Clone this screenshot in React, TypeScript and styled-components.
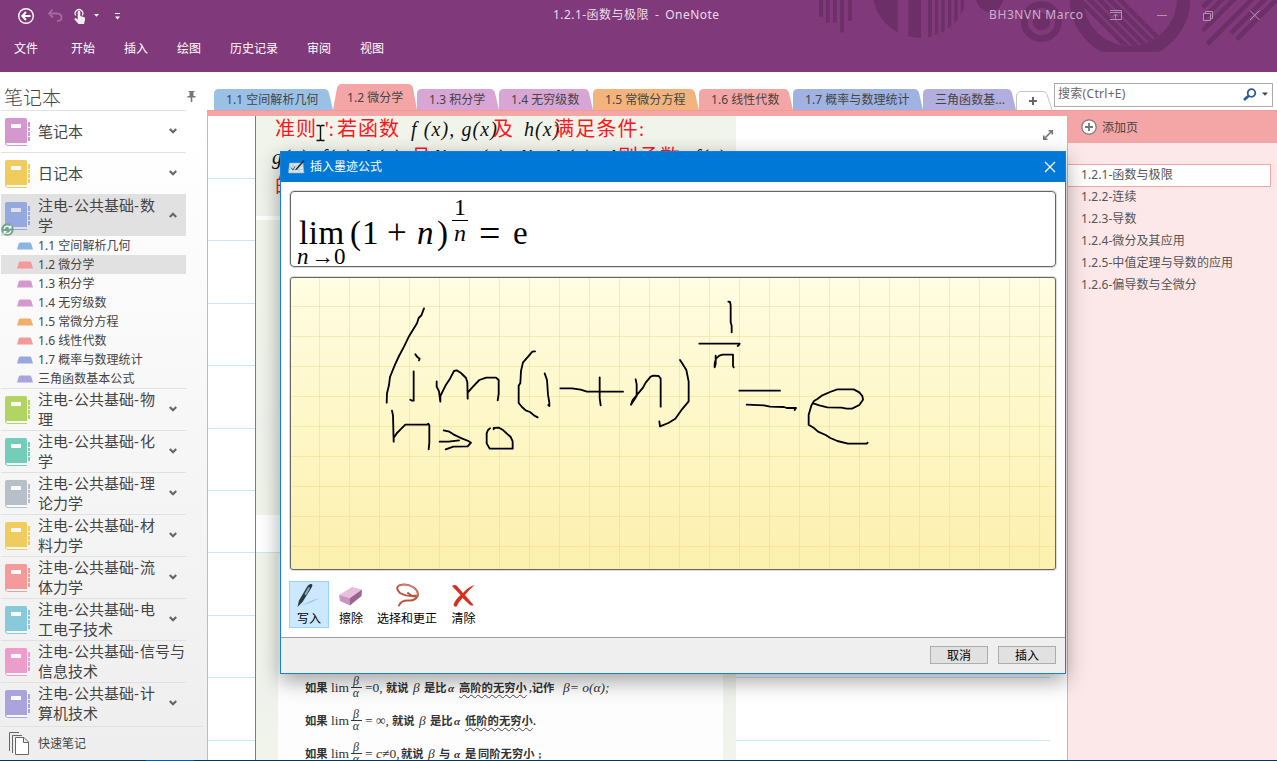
import React from "react";
import styled, { createGlobalStyle } from "styled-components";

const ui = `"Noto Sans", "Noto Sans CJK SC", sans-serif`;
const times = `"Liberation Serif", "Noto Sans CJK SC", serif`;

const Global = createGlobalStyle`
  body { margin: 0; background: #fff; overflow: hidden; }
  * { box-sizing: border-box; }
  svg { display: block; flex: none; }
`;

const App_ = styled.div`
  position: relative;
  width: 1277px;
  height: 761px;
  display: flex;
  flex-direction: column;
  overflow: hidden;
  font: 12px/16px ${ui};
  color: #444;
  white-space: nowrap;
`;

/* ---------- header ---------- */
const Header = styled.header`
  position: relative;
  height: 72px;
  flex: none;
  background: #80397b;
  color: #fff;
`;
const Deco = styled.svg`
  position: absolute;
  right: 0;
  top: 0;
`;
const TitleBar = styled.div`
  position: relative;
  height: 32px;
  display: grid;
  grid-template-columns: 553px 1fr auto;
  align-items: center;
`;
const QuickAccess = styled.div`
  display: flex;
  align-items: center;
  padding-left: 18px;
`;
const WindowTitle = styled.div`
  color: #eadcea;
  letter-spacing: 0.45px;
  word-spacing: 2.5px;
  padding-bottom: 2px;
`;
const WindowTools = styled.div`
  display: flex;
  align-items: center;
  color: #cbb0c9;
`;
const UserName = styled.span`
  width: 121px;
  letter-spacing: 0.6px;
  padding-bottom: 2px;
`;
const Menu = styled.nav`
  position: relative;
  display: flex;
  gap: 29px;
  padding: 9px 0 0 14px;
`;
const MenuItem = styled.span<{ $first?: boolean }>`
  margin-right: ${(p) => (p.$first ? 4 : 0)}px;
`;

/* ---------- body ---------- */
const Body = styled.div`
  flex: 1;
  display: flex;
  min-height: 0;
`;
const Sidebar = styled.aside`
  width: 207px;
  flex: none;
  display: flex;
  flex-direction: column;
  padding-left: 1px;
  background: linear-gradient(#fff, #fff 60px, #f8f8f8 45%, #eeeeee);
`;
const SideTitle = styled.div`
  height: 39px;
  flex: none;
  width: 185px;
  border-bottom: 1px solid #e1e1e1;
  display: flex;
  align-items: flex-end;
  font-size: 19px;
  line-height: 24px;
  font-weight: 300;
  padding-left: 3px;
`;
const PinSlot = styled.span`
  margin-left: 126px;
  padding-bottom: 8px;
`;
const Notebook = styled.div<{ $selected?: boolean; $last?: boolean }>`
  position: relative;
  width: 185px;
  flex: none;
  height: ${(p) => (p.$last ? 43 : 42)}px;
  margin-top: ${(p) => (p.$selected ? -1 : 0)}px;
  padding-top: ${(p) => (p.$selected ? 1 : 0)}px;
  background: ${(p) => (p.$selected ? "#e1e1e1" : "transparent")};
  border-bottom: ${(p) => (p.$selected || p.$last ? 0 : 1)}px solid #e1e1e1;
  display: flex;
  align-items: flex-start;
`;
const BookSlot = styled.span`
  padding: 7px 0 0 4px;
  width: 37px;
  flex: none;
`;
const BookName = styled.span<{ $wide?: boolean }>`
  width: ${(p) => (p.$wide ? 148 : 131)}px;
  flex: none;
  height: 41px;
  display: flex;
  flex-direction: column;
  justify-content: center;
  font-size: 15px;
  line-height: 19.5px;
`;
const Hyphen = styled.span`
  letter-spacing: 1.2px;
`;
const ChevronSlot = styled.span`
  padding-top: 17px;
`;
const SyncBadge = styled.svg`
  position: absolute;
  left: 0;
  top: 29px;
`;
const SectionItem = styled.div<{ $selected?: boolean }>`
  width: 185px;
  height: 19px;
  flex: none;
  display: flex;
  align-items: center;
  gap: 5px;
  padding-left: 16px;
  letter-spacing: 0.06px;
  background: ${(p) => (p.$selected ? "#e1e1e1" : "transparent")};
`;
const Sections = styled.div`
  height: 153px;
  width: 185px;
  flex: none;
  border-bottom: 1px solid #e1e1e1;
`;
const QuickNotes = styled.div`
  width: 202px;
  height: 34px;
  flex: none;
  border-top: 1px solid #e1e1e1;
  display: flex;
  align-items: center;
  gap: 8px;
  padding-left: 8px;
`;

const Main = styled.main`
  flex: 1;
  display: flex;
  flex-direction: column;
  min-width: 0;
`;
const TabStrip = styled.div`
  height: 38px;
  flex: none;
  display: flex;
  align-items: flex-end;
  padding-left: 7px;
  position: relative;
`;
const Tab = styled.div<{ $w: number; $active?: boolean }>`
  position: relative;
  width: ${(p) => p.$w}px;
  height: ${(p) => (p.$active ? 26 : 21)}px;
  padding-left: ${(p) => (p.$active ? 14 : 12)}px;
  padding-top: ${(p) => (p.$active ? 6 : 3)}px;
  flex: none;
`;
const TabShape = styled.svg`
  position: absolute;
  left: 0;
  top: 0;
`;
const TabLabel = styled.span`
  position: relative;
  letter-spacing: 0.05px;
`;
const AddTab = styled.div`
  width: 38px;
  flex: none;
`;
const Search = styled.div`
  width: 219px;
  height: 24px;
  margin-bottom: 3px;
  border: 1px solid #ababab;
  display: flex;
  align-items: center;
  padding: 0 4px 2px 3px;
  color: #666;
  letter-spacing: 0.3px;
  gap: 5px;
`;
const SearchText = styled.span`
  flex: 1;
`;
const Band = styled.div`
  height: 6px;
  flex: none;
  background: #f4a6a6;
  border-top: 1px solid #f09a9a;
`;
const Work = styled.div`
  flex: 1;
  display: flex;
  min-height: 0;
`;

/* ---------- note canvas ---------- */
const Canvas = styled.section`
  position: relative;
  width: 860px;
  flex: none;
  overflow: hidden;
  border-left: 1px solid #f3a4a4;
`;
const Rule = styled.i<{ $y: number }>`
  position: absolute;
  left: 0;
  width: 842px;
  top: ${(p) => p.$y}px;
  height: 1px;
  background: #c6e6fa;
`;
const MarginLine = styled.i`
  position: absolute;
  left: 47px;
  top: 0;
  bottom: 0;
  width: 1px;
  background: #e8504f;
`;
const Slide = styled.div<{ $y: number; $h: number }>`
  position: absolute;
  left: 48px;
  top: ${(p) => p.$y}px;
  width: 480px;
  height: ${(p) => p.$h}px;
  overflow: hidden;
  background: linear-gradient(#f1f4ea, #f1f4ea 30%, #eff2ec 70%, #f1f4ea);
`;
const White = styled(Slide)`
  background: #fff;
`;
const SlideLine = styled.div<{ $y: number; $x: number }>`
  position: absolute;
  left: ${(p) => p.$x}px;
  top: ${(p) => p.$y}px;
  display: flex;
  align-items: baseline;
  font: 20px/28px ${times};
  color: #111;
`;
const Red = styled.span<{ $w: number; $gap?: number }>`
  width: ${(p) => p.$w}px;
  letter-spacing: ${(p) => p.$gap ?? 1}px;
  color: #ff1420;
`;
const MathRun = styled.span<{ $w: number }>`
  width: ${(p) => p.$w}px;
  font-style: italic;
  letter-spacing: 1.1px;
`;
const Scan = styled.div`
  position: absolute;
  left: 22px;
  top: 0;
  width: 445px;
  height: 220px;
  background: #fdfdfd;
  padding: 118px 0 0 27px;
`;
const ScanRow = styled.div`
  height: 33px;
  display: flex;
  align-items: center;
  font: bold 11.5px/16px ${times};
  color: #333;
`;
const Seg = styled.span<{ $w: number; $italic?: boolean; $wave?: boolean; $plain?: boolean }>`
  width: ${(p) => p.$w}px;
  flex: none;
  font-style: ${(p) => (p.$italic ? "italic" : "normal")};
  font-weight: ${(p) => (p.$plain ? 400 : 700)};
  font-size: ${(p) => (p.$plain ? 13.5 : 11.3)}px;
  text-decoration: ${(p) => (p.$wave ? "underline wavy #444 1px" : "none")};
  text-underline-offset: 2px;
`;
const Ratio = styled.span`
  width: 10px;
  margin-right: 4px;
  display: flex;
  flex-direction: column;
  align-items: center;
  font: italic 12px/11px ${times};
`;
const RatioTop = styled.span`
  width: 11px;
  text-align: center;
  border-bottom: 1px solid #333;
`;
const ExpandIcon = styled.svg`
  position: absolute;
  left: 834px;
  top: 13px;
`;
const Cursor = styled.svg`
  position: absolute;
  left: 108px;
  top: 8px;
`;

/* ---------- page list ---------- */
const Pages = styled.aside`
  flex: 1;
  background: #fce8e8;
  border-left: 1px solid #f3a4a4;
`;
const AddPage = styled.div`
  height: 27px;
  margin-bottom: 21px;
  background: #f4a6a6;
  display: flex;
  align-items: flex-start;
  gap: 5px;
  padding: 3px 0 0 13px;
`;
const AddPageLabel = styled.span`
  padding-top: 1px;
`;
const PageItem = styled.div<{ $selected?: boolean }>`
  width: 203px;
  height: 22px;
  line-height: 22px;
  padding-left: 13px;
  color: #555;
  letter-spacing: 0.08px;
  ${(p) =>
    p.$selected &&
    `height: 23px; line-height: 20px; margin-bottom: -1px; background: #fff; border: 1px solid #f3a4a4; border-left: 0;`}
`;

/* ---------- dialog ---------- */
const Dialog = styled.section`
  position: absolute;
  left: 280px;
  top: 151px;
  width: 786px;
  height: 523px;
  border: 1px solid #1681d4;
  background: #fff;
  box-shadow: 0 7px 20px rgba(0, 0, 0, 0.36);
  display: flex;
  flex-direction: column;
  color: #000;
`;
const DialogTitle = styled.div`
  height: 30px;
  flex: none;
  background: #0078d7;
  color: #fff;
  display: flex;
  align-items: center;
  gap: 5px;
  padding: 0 9px 0 7px;
`;
const Fill = styled.span`
  flex: 1;
`;
const Preview = styled.div`
  height: 76px;
  margin: 9px 9px 0 9px;
  flex: none;
  border: 1px solid #666;
  border-radius: 4px;
  box-shadow: 0 0 0 1px #ddd;
  font: 33px/40px ${times};
  display: flex;
  align-items: flex-start;
  padding: 21px 0 0 6px;
`;
const LimStack = styled.span`
  width: 53px;
  display: flex;
  flex-direction: column;
`;
const LimWord = styled.span`
  padding-left: 2px;
  margin-top: 7px;
  line-height: 26px;
  letter-spacing: 0.6px;
`;
const LimUnder = styled.span`
  font-size: 23px;
  line-height: 20px;
  display: flex;
  align-items: center;
  padding-top: 1px;
`;
const Glyph = styled.span<{ $w: number; $italic?: boolean; $size?: number }>`
  width: ${(p) => p.$w}px;
  flex: none;
  font-style: ${(p) => (p.$italic ? "italic" : "normal")};
  font-size: ${(p) => p.$size ?? 33}px;
`;
const Exponent = styled.span`
  width: 16px;
  margin: -18px 11px 0 1px;
  display: flex;
  flex-direction: column;
  align-items: center;
  font-size: 24px;
  line-height: 25px;
`;
const Denominator = styled.span`
  width: 16px;
  border-top: 1px solid #000;
  text-align: center;
  font-style: italic;
  line-height: 24px;
`;
const InkBox = styled.div`
  height: 293px;
  margin: 10px 9px 0 9px;
  flex: none;
  border: 1px solid #666;
  border-radius: 3px;
  box-shadow: 0 0 0 1px #ddd;
  overflow: hidden;
  background: linear-gradient(90deg, rgba(245, 212, 120, 0.45) 1px, transparent 1px) 28px 0 / 30px 30px,
    linear-gradient(rgba(245, 212, 120, 0.45) 1px, transparent 1px) 0 28px / 30px 30px,
    linear-gradient(#fffde2, #fcf0ad);
`;
const Tools = styled.div`
  height: 67px;
  flex: none;
  display: flex;
  padding: 11px 0 0 8px;
`;
const Tool = styled.div<{ $w: number; $on?: boolean }>`
  width: ${(p) => p.$w}px;
  height: 47px;
  border: 1px solid ${(p) => (p.$on ? "#99d1ff" : "transparent")};
  background: ${(p) => (p.$on ? "#cce8ff" : "transparent")};
  display: flex;
  flex-direction: column;
  align-items: center;
  gap: 3px;
`;
const Footer = styled.div`
  flex: 1;
  border-top: 1px solid #a0a0a0;
  background: #efefef;
  display: flex;
  justify-content: flex-end;
  gap: 10px;
  padding: 8px 9px 0 0;
`;
const Button = styled.button`
  width: 58px;
  height: 18px;
  padding: 0;
  border: 1px solid #adadad;
  background: #e1e1e1;
  font: 12px/15px ${ui};
  color: #000;
`;
const TaskbarEdge = styled.div`
  position: absolute;
  left: 0;
  right: 0;
  bottom: 0;
  height: 1px;
  background: linear-gradient(90deg, #10344f 146px, #0f5799 146px, #0f5799 194px, #10344f 194px);
`;

const Book = ({ color, sel }: { color: string; sel?: boolean }) => {
  const bg = sel ? "#e1e1e1" : "#fafafa";
  return (
    <svg width="26" height="28">
      <path d="M2 0H20.500Q22 0 22 1.500V26H2Q0 26 0 24V2Q0 0 2 0Z" fill={color} />
      <path d="M2.500 25H22V27H2.500Q1 27 1 26T2.500 25Z" fill={bg} />
      <path d="M0 24Q0 27.500 3 27.500H22" fill="none" stroke={color} />
      <rect x="6" y="6" width="10" height="4" rx=".5" fill={bg} />
      <path d="M24 4v5M24 10v3M24 14v4M24 19v4" stroke={color} strokeWidth="2" />
    </svg>
  );
};

const Chevron = ({ up }: { up?: boolean }) => (
  <svg width="8" height="6">
    <path d={up ? "M.8 5L4 1.800L7.200 5" : "M.8 1L4 4.200L7.200 1"} fill="none" stroke="#666" strokeWidth="2.200" />
  </svg>
);

const tabs = [
  { t: "1.1 空间解析几何", w: 119, c: "#9ac0e6" },
  { t: "1.2 微分学", w: 84, c: "#f4a6a6", active: true },
  { t: "1.3 积分学", w: 82, c: "#d8a5d4" },
  { t: "1.4 无穷级数", w: 94, c: "#d8a5d4" },
  { t: "1.5 常微分方程", w: 106, c: "#f2b47c" },
  { t: "1.6 线性代数", w: 94, c: "#f4a6a6" },
  { t: "1.7 概率与数理统计", w: 130, c: "#a0b2e2" },
  { t: "三角函数基...", w: 93, c: "#b3aee0" },
];

const sections = [
  ["1.1 空间解析几何", "#8ab4e2"],
  ["1.2 微分学", "#f39a9a"],
  ["1.3 积分学", "#d498ce"],
  ["1.4 无穷级数", "#d498ce"],
  ["1.5 常微分方程", "#f2ad6c"],
  ["1.6 线性代数", "#f39a9a"],
  ["1.7 概率与数理统计", "#96a9de"],
  ["三角函数基本公式", "#aaa4dc"],
];

const notebooks = [
  ["注电-公共基础-物", "理", "#b2d463"],
  ["注电-公共基础-化", "学", "#74cdb8"],
  ["注电-公共基础-理", "论力学", "#b7c0c9"],
  ["注电-公共基础-材", "料力学", "#f0cb5e"],
  ["注电-公共基础-流", "体力学", "#f59a9a"],
  ["注电-公共基础-电", "工电子技术", "#88c9da"],
  ["注电-公共基础-信号与", "信息技术", "#ec9dcb"],
  ["注电-公共基础-计", "算机技术", "#aaa4dc"],
];

const pages = ["1.2.1-函数与极限", "1.2.2-连续", "1.2.3-导数", "1.2.4-微分及其应用", "1.2.5-中值定理与导数的应用", "1.2.6-偏导数与全微分"];

const spaced = (s: string) =>
  s.split("-").map((part, i) => (
    <React.Fragment key={i}>
      {i > 0 && <Hyphen>-</Hyphen>}
      {part}
    </React.Fragment>
  ));

function HeaderArt() {
  const c = "#6c2f68";
  return (
    <Deco width="477" height="72" viewBox="0 0 1431 216" fill={c}>
      <defs>
        <clipPath id="disc"><circle cx="360" cy="-30" r="143" /></clipPath>
        <clipPath id="hole"><circle cx="990" cy="-4" r="141" /></clipPath>
        <clipPath id="strip"><rect width="1431" height="155" /></clipPath>
      </defs>
      <path d="M57 0h12v50h-12zM78 0h11v68h-11zM99 0h11v68h-11zM120 0h12v97h-12zM144 0h12v62h-12z" />
      <g clipPath="url(#disc)">
        <path d="M200 0h93v120h-93zM325 0h38v120h-38zM384 0h12v120h-12zM405 0h10v120h-10zM424 0h10v120h-10zM444 0h10v120h-10zM463 0h10v120h-10zM482 0h10v120h-10z" />
      </g>
      <circle cx="569" cy="-6" r="41" />
      <circle cx="724" cy="65" r="51" fill="none" stroke={c} strokeWidth="20" />
      <circle cx="724" cy="65" r="26" />
      <g clipPath="url(#strip)">
        <circle cx="990" cy="-4" r="161" fill="none" stroke={c} strokeWidth="40" />
        <g clipPath="url(#hole)" stroke={c} strokeWidth="14">
          <path d="M820 -20L990 150M850 -20L1020 150M880 -20L1050 150M910 -20L1080 150M940 -20L1110 150" />
        </g>
      </g>
      <g stroke={c} strokeWidth="14" fill="none">
        <path d="M1208 22L1235 -5M1210 55L1270 -5M1208 92L1305 -5M1222 132L1359 -5M1292 100L1397 -5M1310 118L1433 -5" />
      </g>
    </Deco>
  );
}

const Ink = () => (
  <svg width="764" height="292" viewBox="33 24 2292 876" fill="none" stroke="#000" strokeWidth="5.500" strokeLinecap="round" strokeLinejoin="round">
    <path d="M432 115L424 136L416 144L411 160L388 197L372 230L357 258L345 284L330 321L327 345L321 370L320 398" />
    <path d="M406 253L413 262L419 266L417 271M401 304V392H396L391 389" />
    <path d="M470 334V350L477 364L481 395V378L498 344L510 326L522 303L530 301L543 309L558 324L562 337L563 386V368L579 350L598 330L619 323H648L656 330V372L653 391" />
    <path d="M765 244L757 245L745 259L729 277L723 303L721 339L716 347V399L726 411L737 421L750 426L763 437L773 442" />
    <path d="M794 310L801 330L804 374L808 398V408L805 405" />
    <path d="M841 355H876L902 359L921 365H1029M959 322V384L962 406" />
    <path d="M1067 328L1070 343V378L1053 404L1058 390L1089 353L1097 338L1112 320L1120 317L1136 318L1142 326V410" />
    <path d="M1200 270L1206 279L1219 300L1223 320L1226 335V394L1206 418L1186 446L1165 459L1140 469L1138 454" />
    <path d="M336 422L339 436L341 515V504L351 489L364 476L376 464H441L445 461L448 466V518L446 538" />
    <path d="M491 481L508 485L520 493L545 505L565 513L573 518L563 529L520 530L497 538M479 515H506L537 511" />
    <path d="M630 475L624 480L620 490V520L629 536H698V514L692 501L670 481L657 473L641 474L641 478" />
    <path d="M1345 95L1350 96L1352 105V157L1355 167V187M1258 221H1379L1376 226L1373 228" />
    <path d="M1307 257V282L1304 292V280L1308 266L1318 257L1328 254H1359V287L1361 292" />
    <path d="M1378 362H1500M1400 404L1452 406L1470 410L1512 411L1520 414H1548L1544 420" />
    <path d="M1600 400L1618 406L1642 412L1684 413L1700 416H1716L1738 405L1749 389L1747 378L1738 367L1721 358H1672L1650 366L1627 376L1612 387L1601 394L1594 407L1586 434V464L1603 475L1614 485L1637 495L1651 504L1672 513L1704 521H1760L1763 518" />
  </svg>
);

const ScanLine = ({ val, tail }: { val: React.ReactNode; tail: React.ReactNode }) => (
  <ScanRow>
    <Seg $w={26}>如果</Seg>
    <Seg $w={20} $plain>lim</Seg>
    <Ratio><RatioTop>β</RatioTop><span>α</span></Ratio>
    {val}
    {tail}
  </ScanRow>
);

export default function App() {
  return (
    <App_>
      <Global />
      <Header>
        <HeaderArt />
        <TitleBar>
          <QuickAccess>
            <svg width="105" height="18" fill="none" stroke="#fff">
              <circle cx="8" cy="9" r="7.300" strokeWidth="1.400" />
              <path d="M12.500 9H4.500M8 5L4.300 9L8 13" strokeWidth="2" />
              <path d="M34.500 2.500L31 6.500L35 10.500M31.500 6.500H39Q43.500 7 43.500 10.500T39 14" stroke="#a26b9e" strokeWidth="1.800" />
              <path d="M57.800 8.500A3.800 3.800 0 1 1 64.200 8.500" stroke="#eee" strokeWidth="1.300" />
              <path d="M59.700 4.500Q61 3 62.300 4.500V9L66.500 10.300Q67.500 11 67 13L66 17H60.500L56.500 12.500Q56 11 57.500 11L59.700 12.500Z" fill="#eee" stroke="none" />
              <path d="M76 7H81L78.500 9.800ZM97 9.500H102L99.500 12.500Z" fill="#fff" stroke="none" />
              <path d="M97 6.500H102" />
            </svg>
          </QuickAccess>
          <WindowTitle>1.2.1-函数与极限 - OneNote</WindowTitle>
          <WindowTools>
            <UserName>BH3NVN Marco</UserName>
            <svg width="167" height="20" fill="none" stroke="#b48fb1">
              <path d="M-.5 4.500h12v9h-12zM-1 6.500h13M5.500 12.500V8.500M3 10.500L5.500 8L8 10.500M47 9.500h10M93.500 7.500h7v7h-7zM95.500 7V5.500h7v7H101M140 4.500l9.500 9.500M149.500 4.500L140 14" />
            </svg>
          </WindowTools>
        </TitleBar>
        <Menu>
          {["文件", "开始", "插入", "绘图", "历史记录", "审阅", "视图"].map((m, i) => (
            <MenuItem key={m} $first={i === 0}>{m}</MenuItem>
          ))}
        </Menu>
      </Header>
      <Body>
        <Sidebar>
          <SideTitle>
            笔记本
            <PinSlot>
              <svg width="9" height="11"><path d="M1.500 0h6v1h-1v4h2v1.500H5.300V11H3.700V6.500H.5V5h2V1h-1z" fill="#777" /></svg>
            </PinSlot>
          </SideTitle>
          {[["笔记本", "#d498ce"], ["日记本", "#f0cb5e"]].map(([n, c]) => (
            <Notebook key={n}>
              <BookSlot><Book color={c} /></BookSlot>
              <BookName>{n}</BookName>
              <ChevronSlot><Chevron /></ChevronSlot>
            </Notebook>
          ))}
          <Notebook $selected>
            <BookSlot><Book color="#96a9de" sel /></BookSlot>
            <BookName><span>{spaced("注电-公共基础-数")}</span><span>学</span></BookName>
            <ChevronSlot><Chevron up /></ChevronSlot>
            <SyncBadge width="14" height="14">
              <circle cx="6.500" cy="6.500" r="6.200" fill="#6fa58f" />
              <path d="M3 6A3.700 3.700 0 0 1 9.500 4.500M10 7.500A3.700 3.700 0 0 1 3.500 9M9.800 2.500V5H7.300M3.200 11V8.500H5.700" fill="none" stroke="#fff" strokeWidth="1.200" />
            </SyncBadge>
          </Notebook>
          <Sections>
            {sections.map(([n, c], i) => (
              <SectionItem key={n} $selected={i === 1}>
                <svg width="16" height="8"><path d="M0 7.500L1.700 1.800Q2.200 .5 3.500 .5H12.500Q13.800 .5 14.300 1.800L16 7.500Z" fill={c} /></svg>
                {n}
              </SectionItem>
            ))}
          </Sections>
          {notebooks.map(([a, b, c], i) => (
            <Notebook key={a} $last={i === 7}>
              <BookSlot><Book color={c} /></BookSlot>
              <BookName $wide={i === 6}><span>{spaced(a)}</span><span>{b}</span></BookName>
              {i !== 6 && <ChevronSlot><Chevron /></ChevronSlot>}
            </Notebook>
          ))}
          <QuickNotes>
            <svg width="21" height="24" fill="none" stroke="#666">
              <path d="M.5 19V.5H10M3.500 21V3.500H13" />
              <path d="M6.500 5.500H15L19.500 10V22.500H6.500ZM14.500 5.500V10.500H19.500" fill="#fff" />
            </svg>
            快速笔记
          </QuickNotes>
        </Sidebar>
        <Main>
          <TabStrip>
            {tabs.map(({ t, w, c, active }) => {
              const h = active ? 26 : 21;
              const left = active ? `M0 ${h}L4 4Q5 0 9 0` : `M0 ${h}V5Q0 0 5 0`;
              return (
                <Tab key={t} $w={w} $active={active}>
                  <TabShape width={w} height={h}>
                    <path d={`${left}H${w - 9}Q${w - 5} 0 ${w - 4} 4L${w} ${h}Z`} fill={c} />
                  </TabShape>
                  <TabLabel>{t}</TabLabel>
                </Tab>
              );
            })}
            <AddTab>
              <svg width="37" height="20" fill="none">
                <path d="M.5 20V6Q1 1.500 5 1.500H27Q30 1.500 31 4.500L36 20" stroke="#c4c4c4" />
                <path d="M13 11H21M17 7V15" stroke="#666" strokeWidth="2" />
              </svg>
            </AddTab>
            <Search>
              <SearchText>搜索(Ctrl+E)</SearchText>
              <svg width="14" height="13" fill="none" stroke="#2a5a9a"><circle cx="8.500" cy="5" r="3.800" strokeWidth="1.800" /><path d="M5.800 7.800L1 12" strokeWidth="2.600" /></svg>
              <svg width="6" height="4"><path d="M0 .5H6L3 3.800Z" fill="#444" /></svg>
            </Search>
          </TabStrip>
          <Band />
          <Work>
            <Canvas>
              {[62, 124, 187, 249, 312, 374, 436, 499, 561, 624].map((y) => <Rule key={y} $y={y} />)}
              <Slide $y={0} $h={100}>
                <SlideLine $x={19} $y={-1}>
                  <Red $w={50}>准则</Red>
                  <Red $w={12} $gap={0}>':</Red>
                  <Red $w={74}>若函数</Red>
                  <MathRun $w={82}>f (x), g(x)</MathRun>
                  <Red $w={31}>及</Red>
                  <MathRun $w={30}>h(x)</MathRun>
                  <Red $w={100} $gap={1.2}>满足条件:</Red>
                </SlideLine>
                <SlideLine $x={16} $y={27}>
                  <MathRun $w={139}>g(x)≤f(x)≤h(x)</MathRun>
                  <Red $w={23}>且</Red>
                  <MathRun $w={184}>lim g(x)=lim h(x)=A</MathRun>
                  <Red $w={76}>则函数</Red>
                  <MathRun $w={50}>f(x)</MathRun>
                </SlideLine>
                <SlideLine $x={19} $y={56}><Red $w={30}>的</Red></SlideLine>
              </Slide>
              <White $y={100} $h={4} />
              <Slide $y={104} $h={295} />
              <White $y={399} $h={37} />
              <Slide $y={437} $h={208}>
                <Scan>
                  <ScanLine
                    val={<><Seg $w={21} $plain>=0,</Seg><Seg $w={27}>就说</Seg></>}
                    tail={<><Seg $w={11} $italic $plain>β</Seg><Seg $w={24}>是比</Seg><Seg $w={11} $italic>α</Seg><Seg $w={70} $wave>高阶的无穷小</Seg><Seg $w={34}>,记作</Seg><Seg $w={60} $italic $plain>β= o(α);</Seg></>}
                  />
                  <ScanLine
                    val={<><Seg $w={27} $plain>= ∞,</Seg><Seg $w={27}>就说</Seg></>}
                    tail={<><Seg $w={11} $italic $plain>β</Seg><Seg $w={24}>是比</Seg><Seg $w={11} $italic>α</Seg><Seg $w={68} $wave>低阶的无穷小</Seg><Seg $w={10}> .</Seg></>}
                  />
                  <ScanLine
                    val={<><Seg $w={36} $plain>= <i>c</i>≠0,</Seg><Seg $w={27}>就说</Seg></>}
                    tail={<><Seg $w={11} $italic $plain>β</Seg><Seg $w={15}>与</Seg><Seg $w={11} $italic>α</Seg><Seg $w={13}>是</Seg><Seg $w={60} $wave>同阶无穷小</Seg><Seg $w={10}>;</Seg></>}
                  />
                </Scan>
              </Slide>
              <MarginLine />
              <Cursor width="9" height="18" fill="none" stroke="#111"><path d="M.5 1.500H3.500L4.500 2.500L5.500 1.500H8.500M4.500 2V16M.5 16.500H3.500L4.500 15.500L5.500 16.500H8.500" strokeWidth="1.400" /></Cursor>
              <ExpandIcon width="12" height="12" fill="none" stroke="#777" strokeWidth="1.600"><path d="M6.500 1.800H10.300V5.500M10 2L2 10M1.800 6.500V10.300H5.500" /></ExpandIcon>
            </Canvas>
            <Pages>
              <AddPage>
                <svg width="16" height="16" fill="none" stroke="#777"><circle cx="8" cy="8" r="7.200" fill="#fff" strokeWidth="1.200" /><path d="M4 8H12M8 4V12" strokeWidth="1.800" /></svg>
                <AddPageLabel>添加页</AddPageLabel>
              </AddPage>
              {pages.map((p, i) => <PageItem key={p} $selected={i === 0}>{p}</PageItem>)}
            </Pages>
          </Work>
        </Main>
      </Body>
      <Dialog>
        <DialogTitle>
          <svg width="17" height="16">
            <path d="M1.500 4H15L16 14H.5Z" fill="#d9e6ee" stroke="#9ab" strokeWidth=".6" />
            <path d="M1 7H15M1 10.500H15.500M5 4.500V13.500M11 4.500V13.500" stroke="#a9c4d4" strokeWidth=".7" />
            <path d="M3 8.500L5 11L7 7.500" fill="none" stroke="#456" />
            <path d="M15.500 1L8 9.500L7 11.500L9 10.500L16.500 2Z" fill="#222" />
          </svg>
          插入墨迹公式
          <Fill />
          <svg width="12" height="12" stroke="#fff" strokeWidth="1.200"><path d="M1 1L11 11M11 1L1 11" /></svg>
        </DialogTitle>
        <Preview>
          <LimStack>
            <LimWord>lim</LimWord>
            <LimUnder><Glyph $w={14} $italic $size={23}>n</Glyph><Glyph $w={23} $size={23}>→</Glyph><Glyph $w={12} $size={23}>0</Glyph></LimUnder>
          </LimStack>
          <Glyph $w={12}>(</Glyph>
          <Glyph $w={25}>1</Glyph>
          <Glyph $w={30} $size={35}>+</Glyph>
          <Glyph $w={20} $italic>n</Glyph>
          <Glyph $w={14}>)</Glyph>
          <Exponent><span>1</span><Denominator>n</Denominator></Exponent>
          <Glyph $w={34} $size={38}>=</Glyph>
          <Glyph $w={20}>e</Glyph>
        </Preview>
        <InkBox><Ink /></InkBox>
        <Tools>
          <Tool $w={40} $on>
            <svg width="26" height="26">
              <path d="M4 24L17 18L24 16L14 21Z" fill="#9bb5c9" opacity=".7" />
              <path d="M1.500 25L3 18.500L11.500 4Q13.500 1.500 15.500 2T15 6.500L6.500 20Z" fill="#2b3a40" />
              <path d="M8.500 12L12.500 5L14 6L10 13.500Z" fill="#7fb3bd" />
            </svg>
            写入
          </Tool>
          <Tool $w={44}>
            <svg width="26" height="26">
              <path d="M1 13L14 5L24 7.500L12 16Z" fill="#e6bfdd" />
              <path d="M1 13L12 16V23.500L2 19Z" fill="#c995c0" />
              <path d="M12 16L24 7.500L23.500 14L12 23.500Z" fill="#9a6490" />
            </svg>
            擦除
          </Tool>
          <Tool $w={68}>
            <svg width="26" height="26" fill="none" stroke="#b9543f" strokeWidth="2" strokeLinecap="round">
              <path d="M23 14Q13 15 6 11Q1 6 5 3.500Q12 1 19 5Q25 9 23.500 14Q21 19 15 18.500Q7 18 5 23.500M14 11L18 14L24 13.500" />
              <path d="M5 3.500Q12 1 19 5Q25 9 23 14" stroke="#e0a08f" strokeWidth=".7" />
            </svg>
            选择和更正
          </Tool>
          <Tool $w={45}>
            <svg width="26" height="26" fill="#d8301c">
              <path d="M1 4Q4 2 6 4L12 11Q17 5 23.500 3Q18 8 14 13L22.500 23Q21 24 19 23L11.500 16Q7 21 6 24Q4 26 2.500 23Q4 18 9.500 13Z" />
            </svg>
            清除
          </Tool>
        </Tools>
        <Footer>
          <Button>取消</Button>
          <Button>插入</Button>
        </Footer>
      </Dialog>
      <TaskbarEdge />
    </App_>
  );
}
